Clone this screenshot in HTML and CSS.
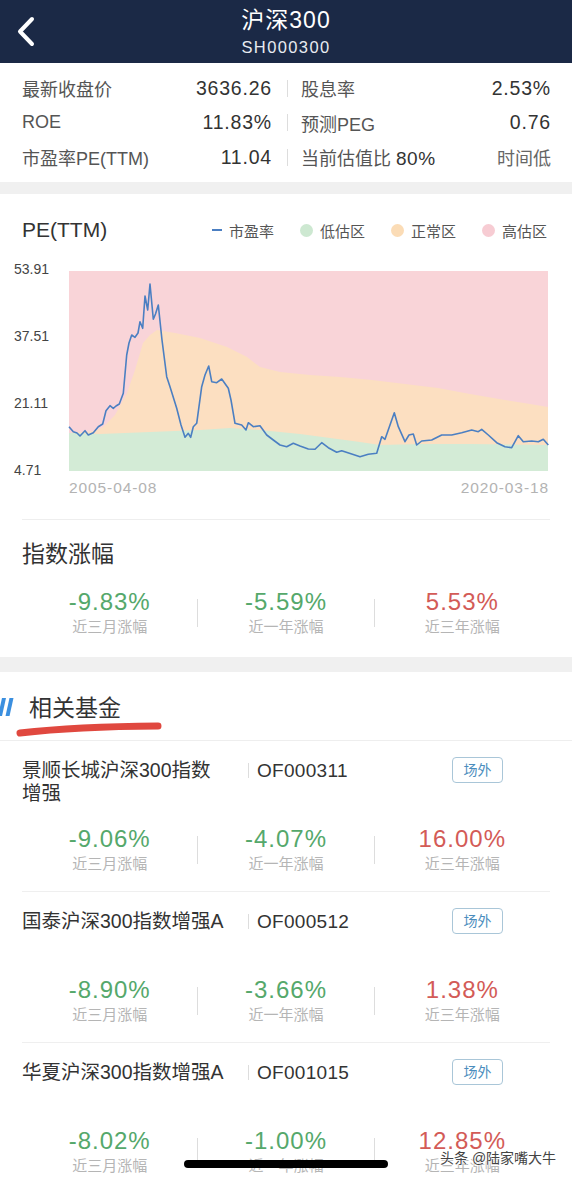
FILE: index.html
```html
<!DOCTYPE html>
<html lang="zh-CN">
<head>
  <meta charset="UTF-8">
  <meta name="viewport" content="width=device-width, initial-scale=1.0">
  <title>沪深300</title>
  <link rel="stylesheet" href="styles.css">
</head>
<body>
<div class="page">
  <header class="topbar">
    <a class="back">
      <svg width="22" height="33" viewBox="0 0 22 33"><polyline points="16,4 4,16.5 16,29" fill="none" stroke="#fff" stroke-width="4" stroke-linecap="round" stroke-linejoin="round"/></svg>
    </a>
    <div class="topbar-title">
      <div class="t-name">沪深300</div>
      <div class="t-code">SH000300</div>
    </div>
    <span></span>
  </header>

  <div class="info">
    <div class="info-row">
      <div class="cell"><span class="lbl">最新收盘价</span><span class="val">3636.26</span></div>
      <i class="vline"></i>
      <div class="cell"><span class="lbl">股息率</span><span class="val">2.53%</span></div>
    </div>
    <div class="info-row">
      <div class="cell"><span class="lbl">ROE</span><span class="val">11.83%</span></div>
      <i class="vline"></i>
      <div class="cell"><span class="lbl">预测PEG</span><span class="val">0.76</span></div>
    </div>
    <div class="info-row">
      <div class="cell"><span class="lbl">市盈率PE(TTM)</span><span class="val">11.04</span></div>
      <i class="vline"></i>
      <div class="cell"><span class="lbl">当前估值比 <em>80%</em></span><span class="val muted">时间低</span></div>
    </div>
  </div>

  <div class="band"></div>

  <section class="pe">
    <div class="pe-head">
      <h2>PE(TTM)</h2>
      <ul class="legend">
        <li><i class="dash"></i>市盈率</li>
        <li><i class="dot low"></i>低估区</li>
        <li><i class="dot mid"></i>正常区</li>
        <li><i class="dot high"></i>高估区</li>
      </ul>
    </div>

    <svg class="pe-chart" width="572" height="250" viewBox="0 0 572 250">
      <rect x="69" y="15" width="479" height="200" fill="#f9d4d8"/>
      <polygon fill="#fcdfc1" points="69,177 95,175 103,171 115,159 127,137 135,114 143,87 150,79 157,74 175,77 200,82 227,91 247,101 260,111 280,116 310,119 340,121 372,124 405,128 438,132 470,138 505,144 530,148 548,151 548,215 69,215"/>
      <polygon fill="#d3ebd6" points="69,177 100,178 150,176 200,174 230,172 260,174 300,178 330,182 360,186 380,189 420,188 470,188 548,189 548,215 69,215"/>
      <polyline fill="none" stroke="#4b7fc2" stroke-width="1.6" stroke-linejoin="round" points="69,170.7 73.3,175.7 77,177 80,180 85,174.7 88.3,179 93.3,176.7 98.3,170.7 102.7,168 106,154.7 110,149.7 113.3,152.3 116,150 119.3,148 123.3,137.3 126.7,99 129,87 131.7,79 135,81.3 138,77 140,65.7 142.7,72.3 145,40 147.7,54 150,28 153.3,63.3 155.5,58 158.3,49 162,84 166.7,120.7 170,130.7 176.7,152.3 181,169 185,181.3 188.3,177.3 190.7,181.3 193.3,170.7 196.7,167.3 201.7,130.7 205,119 208.7,110 211.7,125.7 216.7,126.7 221.7,123 228.3,132.3 231,144 235,167.3 241.7,169 246,174 248.3,166.7 253.3,170.7 260,169.7 266.7,179 273.3,184 280,189 286.7,190.7 293.3,187.3 300,190 308.3,193 315,193.3 321.7,186.7 328.3,191.7 336.7,196.3 341.7,194.7 351.7,198 360,200.7 368.3,198.3 376.7,197.3 381.7,180.7 385,183.3 390,169 394.3,156.7 398.3,170.7 405,185.7 409,179 413.3,178 416.7,189 421.7,185 431.7,184 441.7,179 451.7,179 461.7,176.7 471.7,174 478.3,175.7 481.7,173.3 488.3,179 496.7,186.7 505,190.7 511.7,191.7 518.3,179.7 523.3,185.7 531.7,185 538.3,185.7 543.3,183.3 548.3,189"/>
      <g class="ylab">
        <text x="14" y="14">53.91</text>
        <text x="14" y="81">37.51</text>
        <text x="14" y="148">21.11</text>
        <text x="14" y="215">4.71</text>
      </g>
      <g class="xlab">
        <text x="69" y="233">2005-04-08</text>
        <text x="549" y="233" text-anchor="end">2020-03-18</text>
      </g>
    </svg>

    <div class="rule"></div>
    <h2 class="sub">指数涨幅</h2>
    <div class="stats">
      <div class="stat"><b class="down">-9.83%</b><span>近三月涨幅</span></div>
      <i class="sep"></i>
      <div class="stat"><b class="down">-5.59%</b><span>近一年涨幅</span></div>
      <i class="sep"></i>
      <div class="stat"><b class="up">5.53%</b><span>近三年涨幅</span></div>
    </div>
  </section>

  <div class="band band-lg"></div>

  <section class="funds">
    <div class="funds-head">
      <svg class="slash" width="14" height="18" viewBox="0 0 14 18">
        <polygon points="2,0 6,0 2,18 -2,18" fill="#3b8fdf"/>
        <polygon points="9.5,0 13.5,0 9.5,18 5.5,18" fill="#3b8fdf"/>
      </svg>
      <h2>相关基金</h2>
      <svg class="mark" width="152" height="18" viewBox="0 0 152 18"><path d="M6 13 Q63 6.5 144 6" fill="none" stroke="#e0483f" stroke-width="7" stroke-linecap="round"/></svg>
    </div>

    <div class="fund">
      <div class="fund-head">
        <div class="fund-name">景顺长城沪深300指数增强</div>
        <div class="fund-code"><i></i>OF000311</div>
        <span class="tag">场外</span>
      </div>
      <div class="stats">
        <div class="stat"><b class="down">-9.06%</b><span>近三月涨幅</span></div>
        <i class="sep"></i>
        <div class="stat"><b class="down">-4.07%</b><span>近一年涨幅</span></div>
        <i class="sep"></i>
        <div class="stat"><b class="up">16.00%</b><span>近三年涨幅</span></div>
      </div>
    </div>

    <div class="fund">
      <div class="fund-head">
        <div class="fund-name">国泰沪深300指数增强A</div>
        <div class="fund-code"><i></i>OF000512</div>
        <span class="tag">场外</span>
      </div>
      <div class="stats">
        <div class="stat"><b class="down">-8.90%</b><span>近三月涨幅</span></div>
        <i class="sep"></i>
        <div class="stat"><b class="down">-3.66%</b><span>近一年涨幅</span></div>
        <i class="sep"></i>
        <div class="stat"><b class="up">1.38%</b><span>近三年涨幅</span></div>
      </div>
    </div>

    <div class="fund">
      <div class="fund-head">
        <div class="fund-name">华夏沪深300指数增强A</div>
        <div class="fund-code"><i></i>OF001015</div>
        <span class="tag">场外</span>
      </div>
      <div class="stats">
        <div class="stat"><b class="down">-8.02%</b><span>近三月涨幅</span></div>
        <i class="sep"></i>
        <div class="stat"><b class="down">-1.00%</b><span>近一年涨幅</span></div>
        <i class="sep"></i>
        <div class="stat"><b class="up">12.85%</b><span>近三年涨幅</span></div>
      </div>
    </div>
  </section>

  <div class="home-bar"></div>
  <div class="watermark">头条 @陆家嘴大牛</div>
</div>
</body>
</html>
```

FILE: styles.css
```css
body {
  margin: 0;
  background: #fff;
  font-family: "Liberation Sans", "Noto Sans CJK SC", sans-serif;
  color: #333;
}
.page {
  position: relative;
  width: 572px;
  height: 1177px;
  overflow: hidden;
}

/* top bar */
.topbar {
  height: 63px;
  background: #1b2946;
  display: grid;
  grid-template-columns: 60px 1fr 60px;
  color: #fff;
}
.back {
  padding: 15px 0 0 16px;
}
.back svg {
  display: block;
}
.topbar-title {
  text-align: center;
  padding-top: 6px;
}
.t-name {
  font-size: 23px;
  line-height: 28px;
  letter-spacing: 1px;
}
.t-code {
  font-size: 16.5px;
  line-height: 22px;
  margin-top: 2px;
  letter-spacing: 1.4px;
  color: #e8ebf1;
}

/* key figures */
.info {
  padding: 8px 21px 7.5px 22px;
}
.info-row {
  height: 34.5px;
  display: flex;
  align-items: center;
}
.cell {
  flex: 1;
  display: flex;
  justify-content: space-between;
  align-items: center;
}
.lbl {
  font-size: 18px;
  color: #555;
}
.lbl em {
  font-style: normal;
  font-size: 19px;
  color: #333;
  letter-spacing: 0.5px;
}
.val {
  font-size: 19.5px;
  color: #333;
  letter-spacing: 0.8px;
}
.val.muted {
  font-size: 18px;
  letter-spacing: 0;
  color: #666;
}
.vline {
  width: 1px;
  height: 17px;
  background: #ddd;
  margin: 0 13px 0 15px;
}

.band {
  height: 12px;
  background: #f0f0f0;
}
.band-lg {
  height: 15px;
}

/* PE chart */
.pe {
  padding: 22px 0 19px;
}
.pe-head {
  height: 28px;
  padding: 0 25px 0 22px;
  display: flex;
  justify-content: space-between;
  align-items: center;
}
.pe-head h2 {
  margin: 0;
  font-size: 21px;
  font-weight: normal;
  color: #333;
}
.legend {
  list-style: none;
  margin: 0;
  padding: 0;
  display: flex;
  gap: 26px;
  font-size: 15px;
  color: #555;
}
.legend li {
  display: flex;
  align-items: center;
  gap: 7px;
}
.dash {
  width: 10px;
  height: 1.5px;
  background: #4b7fc2;
}
.dot {
  width: 13px;
  height: 13px;
  border-radius: 50%;
}
.dot.low { background: #cde8d1; }
.dot.mid { background: #fbdcb6; }
.dot.high { background: #f7ccd3; }

.pe-chart {
  display: block;
  margin-top: 12px;
}
.ylab text {
  font-size: 14px;
  fill: #444;
  dominant-baseline: middle;
}
.xlab text {
  font-size: 15.5px;
  fill: #b3b3b3;
  letter-spacing: 0.9px;
  dominant-baseline: middle;
}

.rule {
  height: 1px;
  background: #eee;
  margin: 13px 22px 0;
}
.sub {
  margin: 19px 22px 0;
  font-size: 23px;
  line-height: 30px;
  font-weight: normal;
  color: #333;
}

/* three-column change figures */
.stats {
  display: grid;
  grid-template-columns: 1fr 1px 1fr 1px 1fr;
  align-items: center;
}
.pe .stats {
  margin: 19px 22px 0;
}
.stat {
  text-align: center;
}
.stat b {
  display: block;
  font-weight: normal;
  font-size: 24px;
  line-height: 28px;
  letter-spacing: 1px;
}
.stat span {
  display: block;
  font-size: 15px;
  line-height: 22px;
  color: #b5b5b5;
}
.down { color: #55a86b; }
.up { color: #d35b57; }
.sep {
  height: 28px;
  background: #ddd;
}

/* related funds */
.funds-head {
  position: relative;
  height: 68px;
  display: flex;
  align-items: center;
  border-bottom: 1px solid #eee;
}
.slash {
  display: block;
  margin-top: 2px;
}
.funds-head h2 {
  margin: 0 0 0 15px;
  font-size: 23px;
  font-weight: normal;
  color: #333;
}
.mark {
  position: absolute;
  left: 14px;
  top: 48px;
}

.fund {
  margin: 0 22px;
  padding: 18px 0 16px;
  border-bottom: 1px solid #efefef;
}
.fund:last-child {
  border-bottom: none;
  padding-bottom: 0;
}
.fund-head {
  height: 66px;
  display: flex;
  align-items: flex-start;
}
.fund-name {
  width: 204px;
  margin-right: 22px;
  font-size: 19.5px;
  line-height: 23px;
  color: #333;
}
.fund-code {
  flex: 1;
  height: 23px;
  display: flex;
  align-items: center;
  font-size: 19px;
  letter-spacing: 0.3px;
  color: #333;
}
.fund-code i {
  width: 1px;
  height: 15px;
  background: #ddd;
  margin-right: 8px;
}
.tag {
  box-sizing: border-box;
  width: 51px;
  height: 26px;
  margin: -2px 47px 0 0;
  border: 1px solid #a9c6d8;
  border-radius: 4px;
  font-size: 14px;
  line-height: 24px;
  text-align: center;
  color: #4b8dbd;
}

/* phone chrome over the page */
.home-bar {
  position: absolute;
  left: 184px;
  top: 1160px;
  width: 204px;
  height: 8px;
  border-radius: 4px;
  background: #000;
}
.watermark {
  position: absolute;
  left: 440px;
  top: 1147px;
  font-size: 14px;
  color: #444;
  text-shadow: 0 0 2px #fff, 0 0 2px #fff, 0 0 3px #fff;
}
```
